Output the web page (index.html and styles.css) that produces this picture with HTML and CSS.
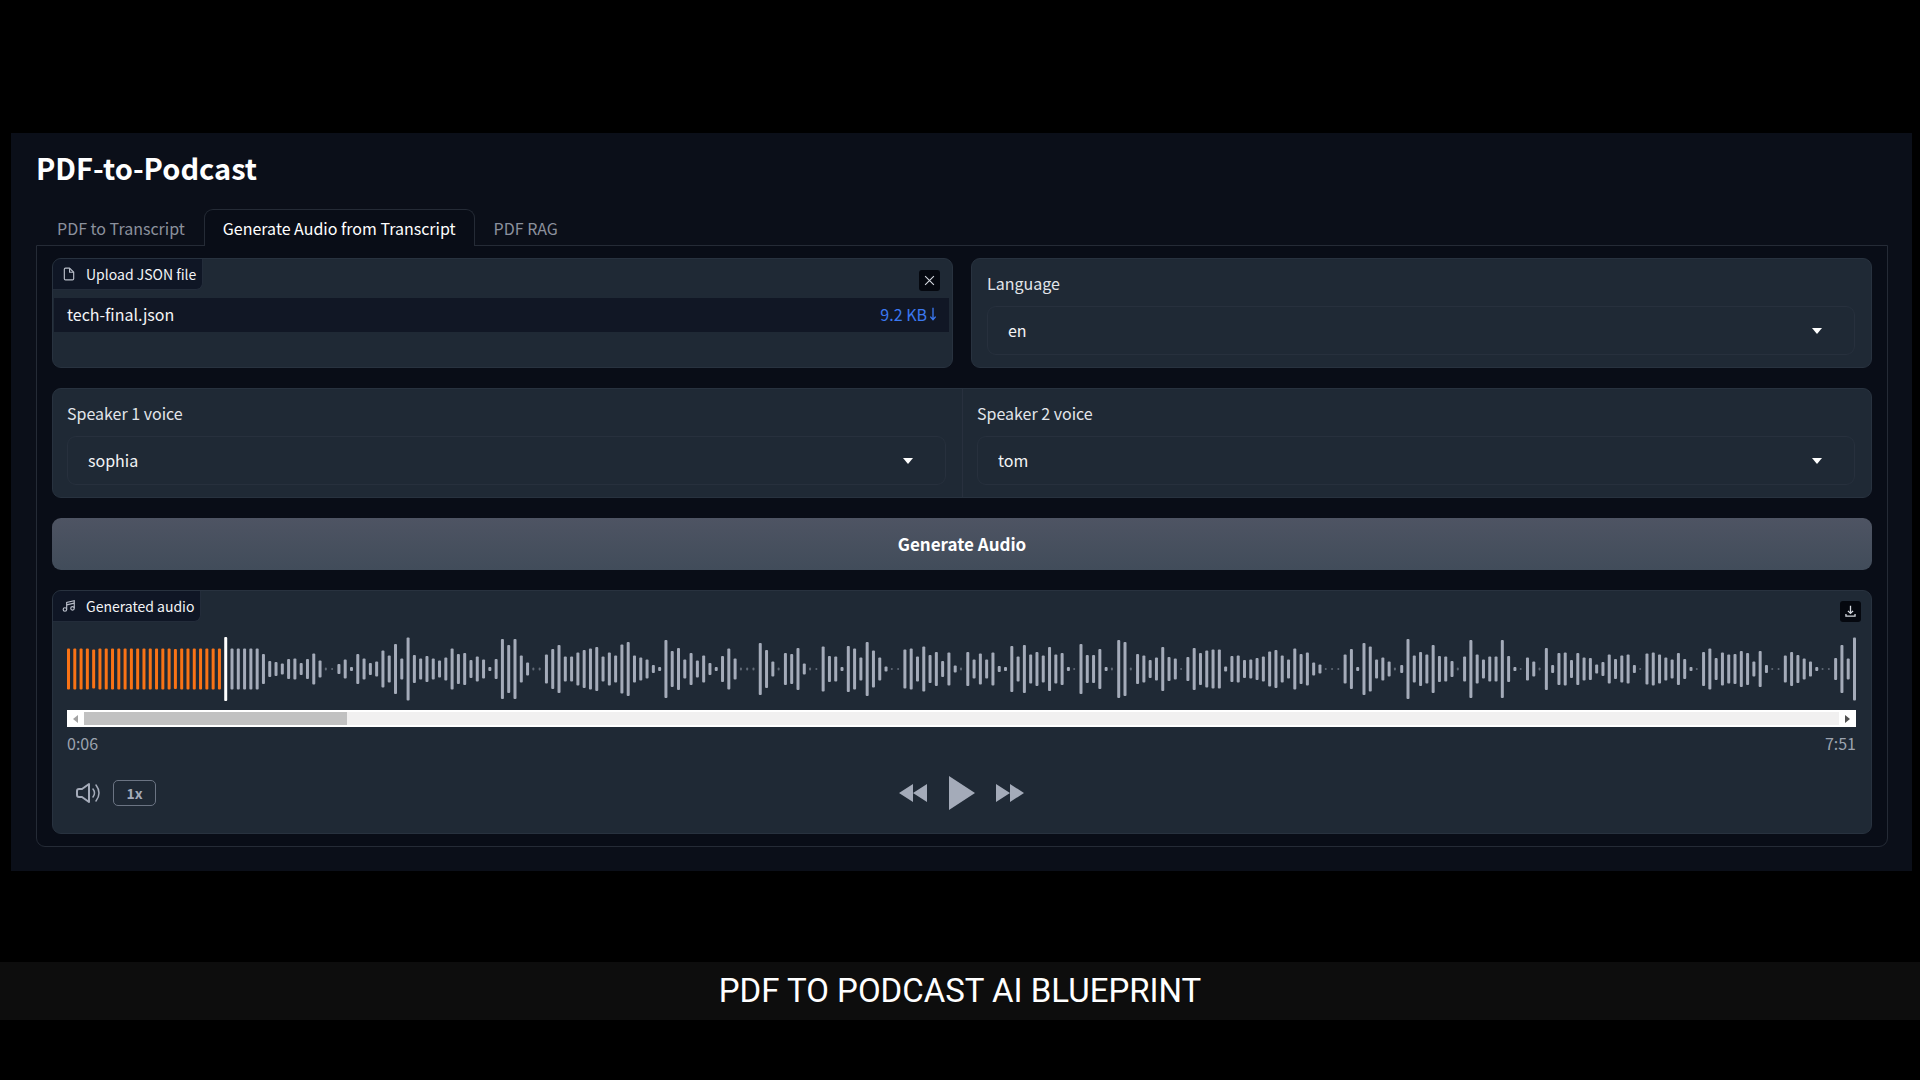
FILE: index.html
```html
<!DOCTYPE html>
<html lang="en">
<head>
<meta charset="utf-8">
<title>PDF-to-Podcast</title>
<link rel="stylesheet" href="styles.css">
</head>
<body>
<main class="app">
  <h1 class="title">PDF-to-Podcast</h1>
  <nav class="tabs" role="tablist">
    <button class="tab" role="tab">PDF to Transcript</button>
    <button class="tab tab-active" role="tab" aria-selected="true">Generate Audio from Transcript</button>
    <button class="tab" role="tab">PDF RAG</button>
  </nav>
  <section class="tab-body">
    <div class="two-up">
      <div class="block file-block">
        <div class="block-head">
          <span class="tag">
            <svg class="tag-icon" viewBox="0 0 24 24" fill="none" stroke="currentColor" stroke-width="2" stroke-linejoin="round"><path d="M13 2H6a2 2 0 0 0-2 2v16a2 2 0 0 0 2 2h12a2 2 0 0 0 2-2V9z"/><path d="M13 2v7h7"/></svg>
            Upload JSON file
          </span>
          <button class="icon-button close-button" aria-label="Clear">
            <svg viewBox="0 0 20 20" fill="none" stroke="currentColor" stroke-width="2"><path d="M2 2l16 16M18 2L2 18"/></svg>
          </button>
        </div>
        <div class="file-row">
          <span>tech-final.json</span>
          <a class="file-size" href="#">9.2 KB<svg class="arrow" viewBox="0 0 8 18" fill="none" stroke="currentColor" stroke-width="1.5"><path d="M4 2v13M1 12l3 3.500 3-3.500"/></svg></a>
        </div>
      </div>
      <div class="block field">
        <label class="label" for="language">Language</label>
        <div class="dropdown"><select id="language"><option>en</option></select><span class="caret"></span></div>
      </div>
    </div>
    <div class="block voices">
      <div class="field">
        <label class="label" for="voice-1">Speaker 1 voice</label>
        <div class="dropdown"><select id="voice-1"><option>sophia</option></select><span class="caret"></span></div>
      </div>
      <div class="field">
        <label class="label" for="voice-2">Speaker 2 voice</label>
        <div class="dropdown"><select id="voice-2"><option>tom</option></select><span class="caret"></span></div>
      </div>
    </div>
    <button class="generate">Generate Audio</button>
    <div class="block audio">
      <div class="block-head">
        <span class="tag">
          <svg class="tag-icon" viewBox="0 0 24 24" fill="none" stroke="currentColor" stroke-width="2"><path d="M8 18V6l13-3v13"/><path d="M8 10l13-3"/><circle cx="5" cy="18" r="3"/><circle cx="18" cy="16" r="3"/></svg>
          Generated audio
        </span>
        <button class="icon-button save-button" aria-label="Download">
          <svg viewBox="0 0 20 20" fill="none" stroke="currentColor" stroke-width="2"><path d="M10 1v12M6 9l4 4 4-4M3 14v3h14v-3"/></svg>
        </button>
      </div>
      <div class="player">
        <svg class="wave" id="wave" viewBox="0 0 1790 64" preserveAspectRatio="none"></svg>
        <div class="scrollbar">
          <span class="scroll-arrow scroll-left"></span>
          <span class="track"><span class="thumb"></span></span>
          <span class="scroll-arrow scroll-right"></span>
        </div>
        <div class="times"><time>0:06</time><time>7:51</time></div>
        <div class="controls">
          <div class="control-side">
            <button class="bare" aria-label="Volume">
              <svg width="26" height="22" viewBox="0 0 26 22" fill="none" stroke="currentColor" stroke-width="2" stroke-linecap="round" stroke-linejoin="round"><path d="M14 2v18l-7-5H4a2 2 0 0 1-2-2V9a2 2 0 0 1 2-2h3z"/><path d="M18 7q3 4 0 8M21 3q6 8 0 16" stroke-width="1.500"/></svg>
            </button>
            <button class="speed">1x</button>
          </div>
          <div class="transport">
            <button class="bare" aria-label="Rewind"><svg width="28" height="20" viewBox="0 0 28 20" fill="currentColor"><path d="M0 10L14 1v18zM14 10L28 1v18z"/></svg></button>
            <button class="bare" aria-label="Play"><svg width="27" height="34" viewBox="0 0 27 34" fill="currentColor"><path d="M1 0L27 17 1 34z"/></svg></button>
            <button class="bare" aria-label="Forward"><svg width="28" height="20" viewBox="0 0 28 20" fill="currentColor"><path d="M28 10L14 1v18zM14 10L0 1v18z"/></svg></button>
          </div>
          <div class="control-side"></div>
        </div>
      </div>
    </div>
  </section>
</main>
<footer class="caption">PDF TO PODCAST AI BLUEPRINT</footer>
<script src="wave.js"></script>
</body>
</html>
```
FILE: styles.css
```css
* { box-sizing: border-box; }

body {
  margin: 0;
  min-height: 100vh;
  padding: 133px 0 60px;
  display: flex;
  flex-direction: column;
  justify-content: space-between;
  background: #000;
  color: #f3f4f6;
  font-family: "Noto Sans CJK SC", "Noto Sans", sans-serif;
  font-size: 16px;
  line-height: 24px;
}

button, select { font: inherit; color: inherit; margin: 0; }
button { padding: 0; border: 0; background: none; cursor: pointer; }
svg { display: block; }

.app {
  margin: 0 8px 0 11px;
  padding: 14px 24px 24px 25px;
  background: #0b0f19;
}

.title {
  margin: 0 0 22px;
  font-size: 29px;
  line-height: 40px;
  font-weight: 600;
  color: #fff;
}

.tabs { display: flex; padding-left: 2px; }
.tab {
  height: 36px;
  padding: 0 18px;
  border: 1px solid transparent;
  border-bottom: 0;
  color: #8b919d;
}
.tab-active {
  height: 37px;
  margin-bottom: -1px;
  position: relative;
  z-index: 1;
  border-color: #252b36;
  border-radius: 9px 9px 0 0;
  background: #090d17;
  color: #fff;
}

.tab-body {
  display: flex;
  flex-direction: column;
  gap: 20px;
  padding: 12px 15px;
  border: 1px solid #252b36;
  border-radius: 0 0 9px 9px;
  background: #090d17;
}

.two-up { display: grid; grid-template-columns: 1fr 1fr; gap: 18px; }

.block {
  border: 1px solid #28323f;
  border-radius: 9px;
  background: #1f2935;
  overflow: hidden;
}
.block-head { display: flex; justify-content: space-between; align-items: flex-start; }
.tag {
  display: flex;
  align-items: center;
  gap: 10px;
  height: 31px;
  padding: 0 6px 0 9px;
  border: 1px solid #232c3a;
  border-width: 0 1px 1px 0;
  border-radius: 0 0 7px 0;
  background: #0f1625;
  font-size: 14px;
}
.tag-icon { width: 14px; height: 14px; color: #b8bdc8; }

.icon-button {
  width: 21px;
  height: 21px;
  padding: 4px;
  border-radius: 3px;
  background: #05080f;
  color: #d5d9e0;
}
.close-button { margin: 11px 12px 0 0; padding: 5px; }
.save-button { margin: 10px 10px 0 0; }

.file-row {
  display: flex;
  justify-content: space-between;
  margin: 6px 3px 0 1px;
  padding: 4px 12px 6px 13px;
  background: #111725;
}
.file-block .block-head { height: 33px; }
.file-size { display: flex; align-items: center; gap: 2px; color: #3b78f0; text-decoration: none; }
.arrow { width: 8px; height: 16px; }

.field { padding: 12px 16px 12px 15px; }
.label { display: block; margin-bottom: 11px; color: #e2e5ea; }
.dropdown {
  display: grid;
  grid-template-columns: 1fr 10px;
  align-items: center;
  border: 1px solid #27303d;
  border-radius: 9px;
  padding-right: 32px;
}
.dropdown select {
  grid-area: 1 / 1 / 2 / 3;
  height: 47px;
  padding: 0 20px 2px;
  border: 0;
  background: none;
  appearance: none;
  outline: none;
}
.caret {
  grid-area: 1 / 2;
  border: 5px solid transparent;
  border-top: 6px solid #fff;
  border-bottom: 0;
  pointer-events: none;
}

.voices { display: grid; grid-template-columns: 1fr 1fr; }
.voices .field { padding-left: 14px; }
.voices .field + .field { border-left: 1px solid #28303e; }

.generate {
  height: 52px;
  border-radius: 9px;
  background: linear-gradient(#4e5463, #414c5a);
  color: #fff;
  font-size: 17px;
  font-weight: 600;
}

.player { padding: 15px 15px 23px 14px; }
.wave { width: 100%; height: 64px; color: #a4abb9; }
.wave .played { fill: #f97316; }
.wave .cursor { fill: #fff; }
.scrollbar {
  display: flex;
  align-items: center;
  height: 17px;
  margin-top: 9px;
  background: #fff;
}
.scroll-arrow { margin: 0 6px; border: 4px solid transparent; }
.scroll-left { border-left-width: 0; border-right: 5px solid #a3a3a3; }
.scroll-right { border-right-width: 0; border-left: 5px solid #505050; }
.track { flex: 1; height: 13px; background: #f1f0f0; }
.thumb { display: block; width: 15%; height: 13px; background: #c1c1c1; }
.times { display: flex; justify-content: space-between; margin-top: 4px; color: #9ca3af; }

.controls {
  display: grid;
  grid-template-columns: 1fr auto 1fr;
  align-items: center;
  height: 34px;
  margin-top: 21px;
  color: #a4abb9;
}
.control-side { display: flex; align-items: center; gap: 12px; padding-left: 8px; }
.speed {
  width: 43px;
  height: 26px;
  border: 1px solid #6b7483;
  border-radius: 5px;
  font-size: 14px;
  font-weight: 600;
  line-height: 24px;
}
.transport { display: flex; align-items: center; gap: 21px; }

.caption {
  padding-bottom: 1px;
  background: #0d0d0d;
  color: #fff;
  font-family: Roboto, sans-serif;
  font-weight: 400;
  font-size: 33px;
  line-height: 57px;
  text-align: center;
}
```
FILE: wave.js
```js
const heights = [
  41,41,41,41,39,41,41,41,41,41,41,41,41,41,41,41,41,40,41,41,41,41,41,41,41,
  41,41,41,41,41,41,30,16,14,11,20,21,12,20,31,17,3,2,10,19,4,30,21,12,15,
  37,27,50,21,63,28,21,26,21,17,23,41,30,32,18,25,19,4,20,60,48,60,27,13,3,
  3,29,40,48,25,25,33,38,41,44,25,33,27,49,54,27,23,19,8,4,58,36,42,19,32,
  17,27,12,4,26,41,21,3,3,3,52,38,15,3,32,30,42,11,3,2,45,26,25,4,46,
  41,23,54,37,23,5,2,2,39,41,25,45,28,34,16,33,7,3,34,19,31,19,33,6,4,
  46,25,48,29,34,27,44,29,32,4,2,50,28,28,40,4,3,58,54,3,30,27,18,23,44,
  24,21,2,24,42,32,37,39,39,5,26,27,18,19,22,25,35,38,27,19,41,30,33,13,9,
  2,2,2,29,40,4,52,45,19,23,15,3,8,60,27,34,29,48,26,25,16,3,25,58,29,
  19,25,25,58,26,4,2,23,15,3,42,8,32,33,18,32,23,22,9,14,29,20,27,29,8,
  2,31,33,29,23,19,32,20,4,2,34,41,22,33,29,30,36,32,15,36,8,2,2,27,34,
  28,21,15,4,2,2,22,48,21,63
];
const PLAYED = 25;
const WIDTH = 1790;
const BAR = 3;
const wave = document.getElementById("wave");
const step = (WIDTH - BAR) / (heights.length - 1);

heights.forEach((h, i) => {
  const isCursor = i === PLAYED;
  const height = isCursor ? 64 : h;
  const bar = document.createElementNS("http://www.w3.org/2000/svg", "rect");
  bar.setAttribute("x", i * step);
  bar.setAttribute("y", (64 - height) / 2);
  bar.setAttribute("width", h < 4 ? 2 : BAR);
  bar.setAttribute("height", height);
  bar.setAttribute("rx", 1);
  bar.setAttribute("fill", "currentColor");
  if (h < 4) bar.setAttribute("opacity", 0.5);
  if (isCursor) bar.setAttribute("class", "cursor");
  else if (i < PLAYED) bar.setAttribute("class", "played");
  wave.appendChild(bar);
});
```
